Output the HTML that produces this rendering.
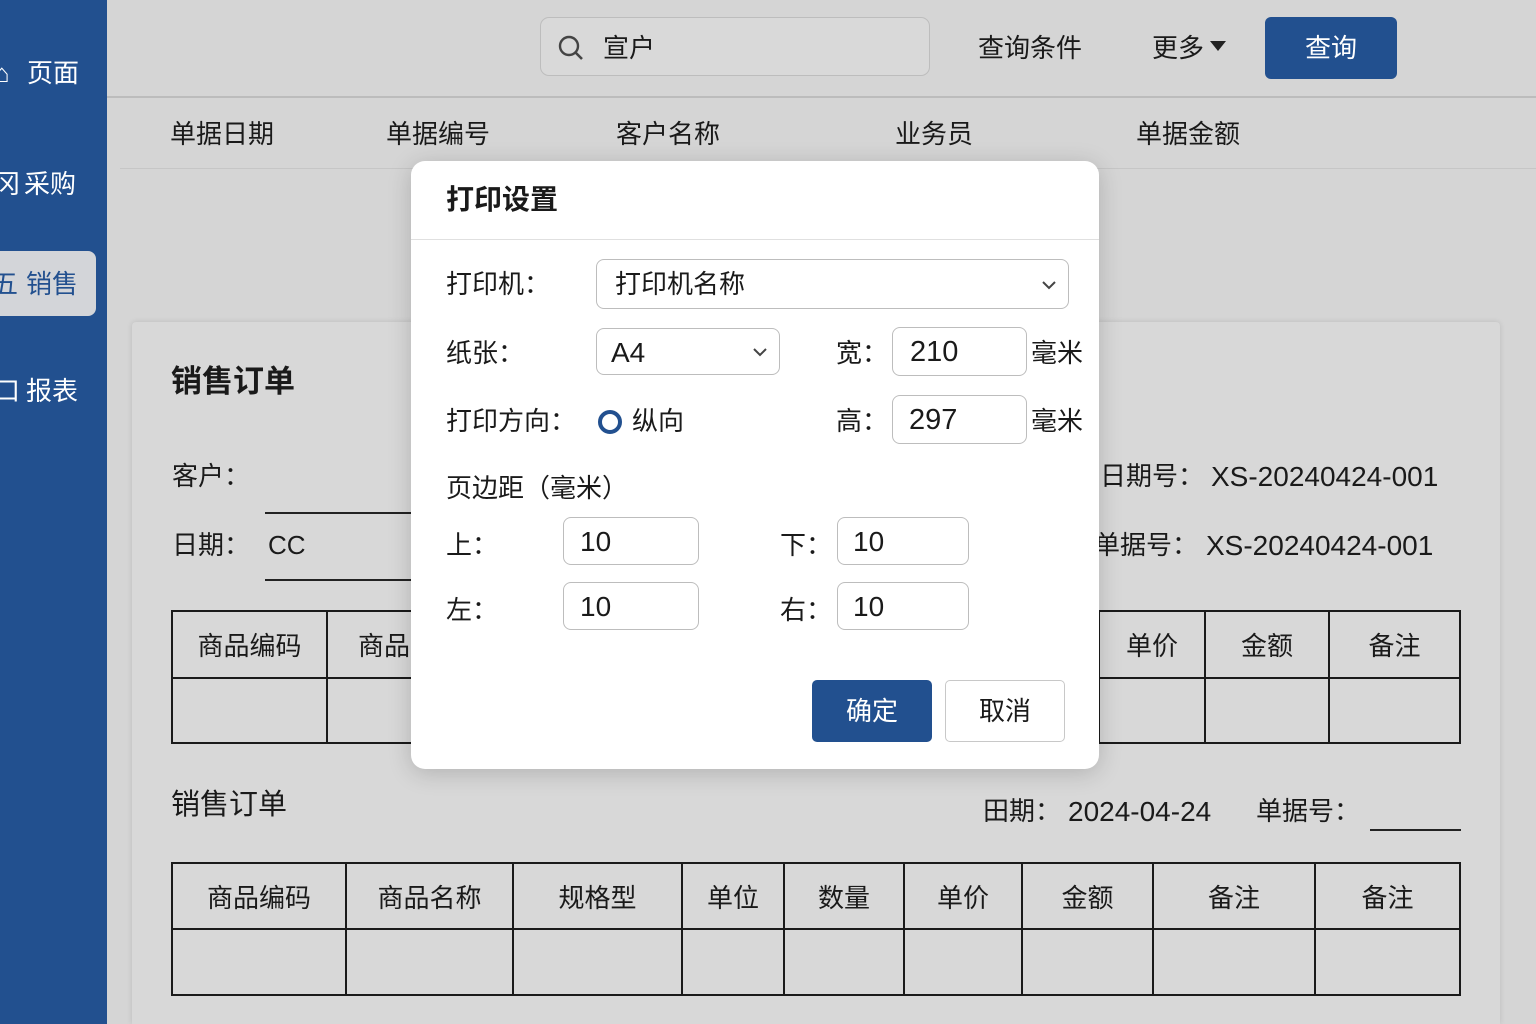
<!DOCTYPE html>
<html style="overflow:hidden;width:1536px;height:1024px"><head><meta charset="utf-8"><style>
*{margin:0;padding:0;box-sizing:border-box}
body{width:1536px;height:1024px;overflow:hidden;background:#d5d5d5;font-family:"Liberation Sans","Noto Sans CJK SC",sans-serif;color:#1a1a1a;position:relative}
.a{position:absolute;white-space:nowrap;line-height:1}
.t{font-size:26px}
.sb{position:absolute;left:0;top:0;width:107px;height:1024px;background:#22508f}
.sbt{position:absolute;color:#fff;font-size:26px;line-height:1}
.box{position:absolute;border:1px solid #bdbdbd;border-radius:8px;background:#fff}
table{position:absolute;border-collapse:collapse}
td{border:2px solid #1a1a1a;text-align:center;font-size:26px;padding:0}
</style></head><body>
<div class="sb"></div>
<div class="sbt" style="left:-6px;top:60px">⌂</div>
<div class="sbt" style="left:27px;top:60px">页面</div>
<div class="sbt" style="left:-6px;top:171px">冈</div>
<div class="sbt" style="left:24px;top:171px">采购</div>
<div style="position:absolute;left:0;top:251px;width:96px;height:65px;background:#d3d5d9;border-radius:0 8px 8px 0"></div>
<div class="sbt" style="left:-8px;top:271px;color:#22508f">五</div>
<div class="sbt" style="left:26px;top:271px;color:#22508f">销售</div>
<div class="sbt" style="left:-6px;top:378px">口</div>
<div class="sbt" style="left:26px;top:378px">报表</div>

<div style="position:absolute;left:107px;top:96px;width:1429px;height:2px;background:#bcbcbc"></div>
<div style="position:absolute;left:540px;top:17px;width:390px;height:59px;border:1px solid #bdbdbd;border-radius:9px;background:#d9d9d9"></div>
<svg class="a" style="left:557px;top:34px" width="28" height="28" viewBox="0 0 28 28"><circle cx="12" cy="12" r="9" fill="none" stroke="#444" stroke-width="2.4"/><line x1="18.5" y1="18.5" x2="25" y2="25" stroke="#444" stroke-width="2.6"/></svg>
<div class="a t" style="left:603px;top:35px">宣户</div>
<div class="a t" style="left:978px;top:35px">查询条件</div>
<div class="a t" style="left:1152px;top:35px">更多</div>
<div class="a" style="left:1210px;top:41px;width:0;height:0;border-left:8px solid transparent;border-right:8px solid transparent;border-top:10px solid #222"></div>
<div style="position:absolute;left:1265px;top:17px;width:132px;height:62px;background:#22508f;border-radius:6px;color:#fff;font-size:26px;text-align:center;line-height:62px">查询</div>

<div class="a t" style="left:170px;top:121px">单据日期</div>
<div class="a t" style="left:386px;top:121px">单据编号</div>
<div class="a t" style="left:616px;top:121px">客户名称</div>
<div class="a t" style="left:895px;top:121px">业务员</div>
<div class="a t" style="left:1136px;top:121px">单据金额</div>
<div style="position:absolute;left:120px;top:168px;width:1416px;height:1px;background:#c6c6c6"></div>

<div style="position:absolute;left:132px;top:322px;width:1368px;height:702px;background:#d8d8d8;border-radius:4px 4px 0 0;box-shadow:0 0 6px rgba(0,0,0,.12)"></div>
<div class="a" style="left:171px;top:366px;font-size:31px;font-weight:bold">销售订单</div>
<div class="a t" style="left:172px;top:463px">客户：</div>
<div style="position:absolute;left:265px;top:512px;width:150px;height:2px;background:#222"></div>
<div class="a t" style="left:172px;top:532px">日期：</div>
<div class="a t" style="left:268px;top:532px">CC</div>
<div style="position:absolute;left:265px;top:579px;width:150px;height:2px;background:#222"></div>
<div class="a t" style="left:1100px;top:463px">日期号：</div>
<div class="a t" style="left:1211px;top:463px;font-size:28px">XS-20240424-001</div>
<div class="a t" style="left:1094px;top:532px">单据号：</div>
<div class="a t" style="left:1206px;top:532px;font-size:28px">XS-20240424-001</div>

<table style="left:171px;top:610px;width:1290px;height:134px">
<tr style="height:67px"><td style="width:155px">商品编码</td><td style="text-align:left;padding-left:30px">商品</td><td style="width:106px">单价</td><td style="width:124px">金额</td><td style="width:131px">备注</td></tr>
<tr><td></td><td></td><td></td><td></td><td></td></tr></table>

<div class="a" style="left:171px;top:791px;font-size:29px">销售订单</div>
<div class="a t" style="left:983px;top:798px">田期：</div>
<div class="a t" style="left:1068px;top:798px;font-size:28px">2024-04-24</div>
<div class="a t" style="left:1256px;top:798px">单据号：</div>
<div style="position:absolute;left:1370px;top:829px;width:91px;height:2px;background:#222"></div>
<table style="left:171px;top:862px;width:1290px;height:134px">
<tr style="height:66px"><td style="width:174px">商品编码</td><td style="width:167px">商品名称</td><td style="width:169px">规格型</td><td style="width:102px">单位</td><td style="width:120px">数量</td><td style="width:118px">单价</td><td style="width:131px">金额</td><td style="width:162px">备注</td><td>备注</td></tr>
<tr><td></td><td></td><td></td><td></td><td></td><td></td><td></td><td></td><td></td></tr></table>

<!-- modal -->
<div style="position:absolute;left:411px;top:161px;width:688px;height:608px;background:#fff;border-radius:14px;box-shadow:0 4px 24px rgba(0,0,0,.18)"></div>
<div class="a" style="left:446px;top:186px;font-size:28px;font-weight:bold">打印设置</div>
<div style="position:absolute;left:411px;top:239px;width:688px;height:1px;background:#e0e0e0"></div>
<div class="a t" style="left:446px;top:271px">打印机：</div>
<div class="box" style="left:596px;top:259px;width:473px;height:50px"></div>
<div class="a t" style="left:615px;top:271px">打印机名称</div>
<svg class="a" style="left:1041px;top:279px" width="16" height="12"><path d="M2 3l6 6 6-6" fill="none" stroke="#444" stroke-width="2"/></svg>
<div class="a t" style="left:446px;top:340px">纸张：</div>
<div class="box" style="left:596px;top:328px;width:184px;height:47px"></div>
<div class="a t" style="left:611px;top:339px;font-size:28px">A4</div>
<svg class="a" style="left:752px;top:346px" width="16" height="12"><path d="M2 3l6 6 6-6" fill="none" stroke="#444" stroke-width="2"/></svg>
<div class="a t" style="left:836px;top:340px">宽：</div>
<div class="box" style="left:892px;top:327px;width:135px;height:49px"></div>
<div class="a" style="left:910px;top:338px;font-size:29px">210</div>
<div class="a t" style="left:1031px;top:340px">毫米</div>
<div class="a t" style="left:446px;top:408px">打印方向：</div>
<div class="a" style="left:598px;top:410px;width:24px;height:24px;border:4px solid #22508f;border-radius:50%"></div>
<div class="a t" style="left:632px;top:408px">纵向</div>
<div class="a t" style="left:836px;top:408px">高：</div>
<div class="box" style="left:892px;top:395px;width:135px;height:49px"></div>
<div class="a" style="left:909px;top:406px;font-size:29px">297</div>
<div class="a t" style="left:1031px;top:408px">毫米</div>
<div class="a t" style="left:446px;top:475px">页边距（毫米）</div>
<div class="a t" style="left:446px;top:532px">上：</div>
<div class="box" style="left:563px;top:517px;width:136px;height:48px"></div>
<div class="a" style="left:580px;top:528px;font-size:28px">10</div>
<div class="a t" style="left:780px;top:532px">下：</div>
<div class="box" style="left:837px;top:517px;width:132px;height:48px"></div>
<div class="a" style="left:853px;top:528px;font-size:28px">10</div>
<div class="a t" style="left:446px;top:597px">左：</div>
<div class="box" style="left:563px;top:582px;width:136px;height:48px"></div>
<div class="a" style="left:580px;top:593px;font-size:28px">10</div>
<div class="a t" style="left:780px;top:597px">右：</div>
<div class="box" style="left:837px;top:582px;width:132px;height:48px"></div>
<div class="a" style="left:853px;top:593px;font-size:28px">10</div>
<div style="position:absolute;left:812px;top:680px;width:120px;height:62px;background:#22508f;border-radius:5px;color:#fff;font-size:26px;text-align:center;line-height:62px">确定</div>
<div style="position:absolute;left:945px;top:680px;width:120px;height:62px;background:#fff;border:1px solid #c8c8c8;border-radius:5px;font-size:26px;text-align:center;line-height:60px">取消</div>
</body></html>
